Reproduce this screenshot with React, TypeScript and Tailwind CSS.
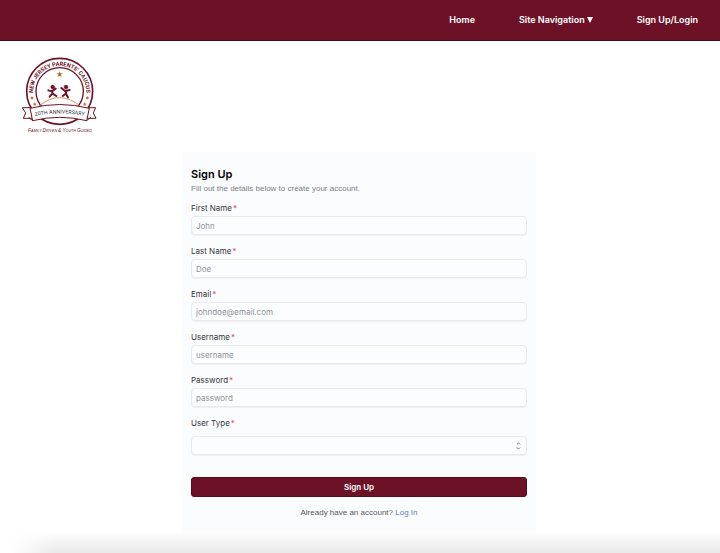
import { ChevronDown, ChevronUp } from "lucide-react";

const fields = [
  { id: "first", label: "First Name", type: "text", placeholder: "John" },
  { id: "last", label: "Last Name", type: "text", placeholder: "Doe" },
  { id: "email", label: "Email", type: "email", placeholder: "johndoe@email.com" },
  { id: "username", label: "Username", type: "text", placeholder: "username" },
  { id: "password", label: "Password", type: "password", placeholder: "password" },
];

const controlClass =
  "block h-[19px] w-full appearance-none rounded-[4px] border border-[#e8eaee] bg-[#fcfdff] px-1 text-[8px] leading-3 text-gray-700 shadow-[0_1px_1px_rgba(0,0,0,0.05)] placeholder:text-[#8f9299] focus:outline-[#6d1226]";

const starPath = "M0-8 2.1-2.8 7.6-2.5 3.4 1 4.8 6.5 0 3.5-4.8 6.5-3.4 1-7.6-2.5-2.1-2.8Z";

function Logo() {
  return (
    <svg viewBox="30 24 240 240" className="size-20" role="img" aria-label="New Jersey Parents' Caucus">
      <defs>
        <path id="ring" d="M72 155 A80 80 0 1 1 226 155" />
        <path id="ribbon" d="M60 207 Q149 186 238 207" />
      </defs>
      <circle cx="149" cy="130" r="99" fill="white" stroke="#6d1226" strokeWidth="5" />
      <circle cx="149" cy="130" r="71" fill="none" stroke="#6d1226" strokeWidth="4" />
      <text fill="#6d1226" fontFamily="Roboto, sans-serif" fontWeight="700" fontSize="17" textAnchor="middle">
        <textPath href="#ring" startOffset="50%">NEW JERSEY PARENTS’ CAUCUS</textPath>
      </text>
      <g fill="#b5702f">
        <path d={starPath} transform="translate(149 79) scale(1.2)" />
        <path d={starPath} transform="translate(66 150) scale(.8)" />
        <path d={starPath} transform="translate(74 169) scale(.8)" />
        <path d={starPath} transform="translate(232 150) scale(.8)" />
        <path d={starPath} transform="translate(224 169) scale(.8)" />
      </g>
      <path d="M86 175 Q149 123 212 175" fill="none" stroke="#d79a5b" strokeWidth="3" />
      <g fill="#6d1226" stroke="#6d1226" strokeLinecap="round" strokeLinejoin="round">
        <circle cx="128" cy="117" r="6" />
        <path d="M115 127 125 130 137 122M127 130V137L119 146M128 137 139 144" fill="none" strokeWidth="6" />
        <circle cx="168" cy="117" r="6" />
        <path d="M154 120 165 129 179 126M168 130V137L158 144M168 137 174 148" fill="none" strokeWidth="6" />
      </g>
      <g fill="white" stroke="#6d1226" strokeWidth="3" strokeLinejoin="round">
        <path d="M62 179H37L47 195 40 211H68ZM236 179H257L250 195 258 211H230Z" />
        <path d="M60 181Q149 158 238 181L230 218Q149 198 68 218Z" />
        <path d="M68 218 56 208M230 218 242 208" />
      </g>
      <text fill="#333" fontFamily="Roboto, sans-serif" fontSize="16" textAnchor="middle">
        <textPath href="#ribbon" startOffset="50%">20TH ANNIVERSARY</textPath>
      </text>
      <text x="150" y="251" fill="#6d1226" fontFamily="'Liberation Sans', sans-serif" fontStyle="italic" fontSize="14" textAnchor="middle">
        F<tspan fontSize="11">AMILY </tspan>D<tspan fontSize="11">RIVEN </tspan>&amp; Y<tspan fontSize="11">OUTH </tspan>G<tspan fontSize="11">UIDED</tspan>
      </text>
    </svg>
  );
}

function FieldLabel({ id, children }: { id: string; children: string }) {
  return (
    <label htmlFor={id} className="block text-[8px] leading-3 text-[#35373c]">
      {children}
      <span className="ml-px text-[#d34b55]">*</span>
    </label>
  );
}

export default function App() {
  return (
    <div className="bg-white font-['Inter',sans-serif]">
      <header className="border-b border-[#4f0717] bg-[#6d1226]">
        <nav className="flex h-10 items-center justify-end gap-11 pr-[22px] text-[9px] font-semibold leading-3 text-white">
          <a href="#home">Home</a>
          <button type="button" className="flex items-center gap-0.5">
            Site Navigation
            <svg viewBox="0 0 6 6" className="size-1.5" fill="currentColor" aria-hidden="true">
              <path d="M0 0H6L3 6Z" />
            </svg>
          </button>
          <a href="#login">Sign Up/Login</a>
        </nav>
      </header>

      <div className="px-5 pt-[15px] pb-4">
        <Logo />
      </div>

      <main className="pr-0.5">
        <form className="mx-auto w-full max-w-[354px] bg-[#fbfcfe] px-[9px] pt-[15px] pb-3">
          <h1 className="text-[11px] font-semibold leading-[14px] text-black">Sign Up</h1>
          <p className="mt-0.5 font-['Liberation_Sans',sans-serif] text-[8px] leading-3 text-[#7c7f87]">Fill out the details below to create your account.</p>

          <div className="mt-[7px] flex flex-col gap-2.5">
            {fields.map((f) => (
              <div key={f.id} className="flex flex-col gap-0.5">
                <FieldLabel id={f.id}>{f.label}</FieldLabel>
                <input id={f.id} type={f.type} placeholder={f.placeholder} className={controlClass} />
              </div>
            ))}
            <div className="flex flex-col gap-[7px]">
              <FieldLabel id="type">User Type</FieldLabel>
              <div className="relative">
                <select id="type" defaultValue="" className={controlClass}>
                  <option value=""></option>
                </select>
                <span className="pointer-events-none absolute inset-y-0 right-1.5 flex flex-col items-center justify-center text-[#555960]">
                  <ChevronUp className="size-[5px]" strokeWidth={4} />
                  <ChevronDown className="size-[5px]" strokeWidth={4} />
                </span>
              </div>
            </div>
          </div>

          <button type="submit" className="mt-[22px] block h-5 w-full rounded-[3px] border border-[#570b1b] bg-[#6d1226] text-[8px] font-semibold leading-3 text-white">
            Sign Up
          </button>
          <p className="mt-2.5 text-center font-['Liberation_Sans',sans-serif] text-[8px] leading-3 text-[#55585f]">
            Already have an account?{" "}
            <a href="#login" className="text-[#557fb8]">Log In</a>
          </p>
        </form>
      </main>

      <div className="flex h-[22px] bg-linear-to-b from-white to-[#e9e9e9]">
        <div className="w-14 bg-linear-to-r from-white from-20% to-transparent" />
      </div>
    </div>
  );
}
